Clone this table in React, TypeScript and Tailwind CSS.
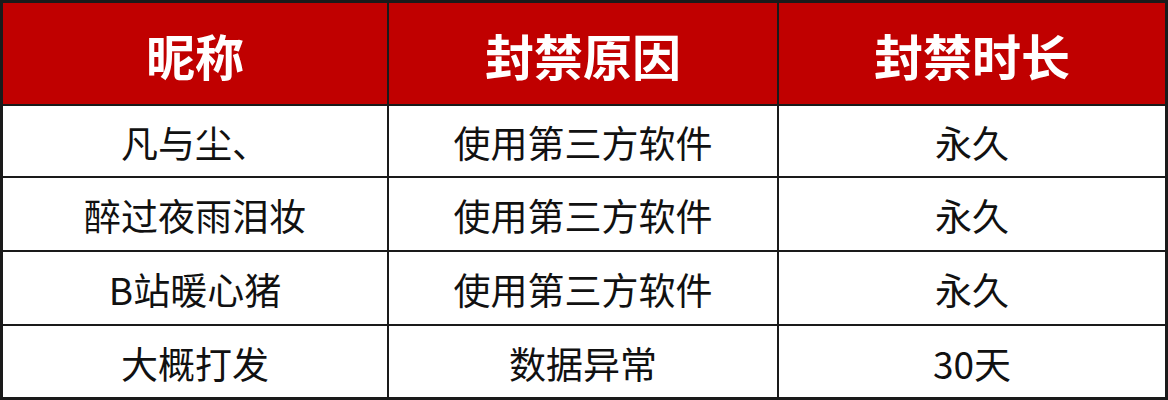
import * as React from "react";

const headers = ["昵称", "封禁原因", "封禁时长"];

const rows = [
  ["凡与尘、", "使用第三方软件", "永久"],
  ["醉过夜雨泪妆", "使用第三方软件", "永久"],
  ["B站暖心猪", "使用第三方软件", "永久"],
  ["大概打发", "数据异常", "30天"],
];

export default function App() {
  return (
    <div
      className="w-[1168px] h-[400px] bg-[#1a1a1a] border-[3px] border-[#1a1a1a] grid grid-cols-[384px_388px_386px] grid-rows-[101px_70px_72px_72px_71px] gap-[2px]"
      style={{ fontFamily: '"Noto Sans CJK SC", "Noto Sans", sans-serif' }}
    >
      {headers.map((h) => (
        <div
          key={h}
          className="bg-[#c00000] flex items-center justify-center text-white text-[49px] font-bold leading-none pt-[2px]"
        >
          {h}
        </div>
      ))}
      {rows.map((row, i) =>
        row.map((cell, j) => (
          <div
            key={`${i}-${j}`}
            className="bg-white flex items-center justify-center text-[#111] text-[37px] leading-none pt-[3px]"
          >
            {cell}
          </div>
        ))
      )}
    </div>
  );
}
